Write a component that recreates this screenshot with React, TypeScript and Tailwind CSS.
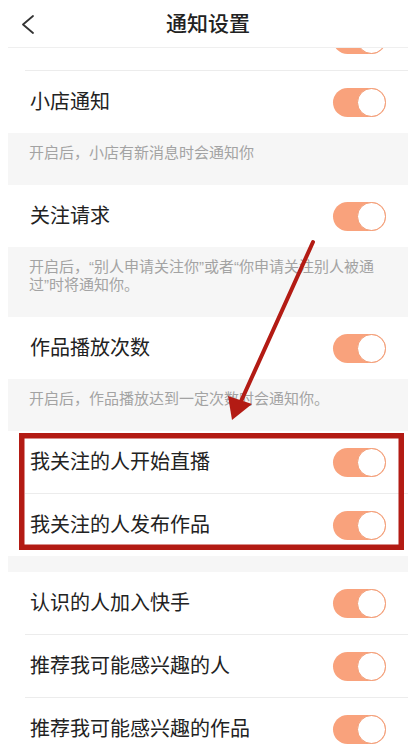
import React from 'react'

const font = { fontFamily: '"Liberation Sans", "Noto Sans CJK SC", sans-serif' }

function Toggle() {
  return (
    <div className="flex h-[29px] w-[53px] shrink-0 justify-end rounded-full bg-[#f9a27c]">
      <div className="h-[29px] w-[29px] rounded-full border-[1.5px] border-[#f29a72] bg-white" />
    </div>
  )
}

function Row({ label, divider = false }: { label: string; divider?: boolean }) {
  return (
    <div className="bg-white">
      <div className="flex h-[62px] items-center justify-between pl-[22px] pr-[22px]">
        <span className="text-[20px] text-[#222]">{label}</span>
        <Toggle />
      </div>
      {divider && <div className="ml-[17px] h-px bg-[#ececec]" />}
    </div>
  )
}

function Desc({ children }: { children: React.ReactNode }) {
  return (
    <div className="bg-[#f6f6f6] pl-[21px] pr-[22px] pt-[11px] pb-[23px] text-[15px] leading-[18px] text-[#a3a3a3]">
      {children}
    </div>
  )
}

export default function App() {
  return (
    <div className="relative h-[748px] w-[408px] overflow-hidden bg-white pl-2" style={font}>
      <div className="w-[400px]">
        <div className="relative z-10 grid h-[48px] grid-cols-[1fr_auto_1fr] items-center border-b border-[#efefef] bg-white">
          <div className="pl-[13px]">
            <svg width="14" height="20" viewBox="0 0 14 20" fill="none">
              <polyline points="12,2 2,10.5 12,19" stroke="#333" strokeWidth="1.8" strokeLinecap="round" strokeLinejoin="round" />
            </svg>
          </div>
          <h1 className="text-[21px] font-medium text-[#222]">通知设置</h1>
          <div />
        </div>

        <div className="h-[700px] overflow-hidden">
          <div className="-mt-[40px]">
            <Row label="私信通知" divider />
            <Row label="小店通知" />
            <Desc>开启后，小店有新消息时会通知你</Desc>
            <Row label="关注请求" />
            <Desc>开启后，“别人申请关注你”或者“你申请关注别人被通过”时将通知你。</Desc>
            <Row label="作品播放次数" />
            <Desc>开启后，作品播放达到一定次数时会通知你。</Desc>
            <Row label="我关注的人开始直播" divider />
            <Row label="我关注的人发布作品" />
            <div className="h-[16px] bg-[#f6f6f6]" />
            <Row label="认识的人加入快手" divider />
            <Row label="推荐我可能感兴趣的人" divider />
            <Row label="推荐我可能感兴趣的作品" />
          </div>
        </div>
      </div>

      {/* annotation overlay: red box + arrow */}
      <svg className="pointer-events-none absolute inset-0 z-20" width="408" height="748" viewBox="0 0 408 748">
        <rect x="21.75" y="435.75" width="379.5" height="111.5" fill="none" stroke="#b31b14" strokeWidth="5.5" />
        <line x1="313" y1="242" x2="238" y2="408" stroke="#b31b14" strokeWidth="4" strokeLinecap="round" />
        <polygon points="232,420 228,396 252,404" fill="#b31b14" />
      </svg>
    </div>
  )
}
